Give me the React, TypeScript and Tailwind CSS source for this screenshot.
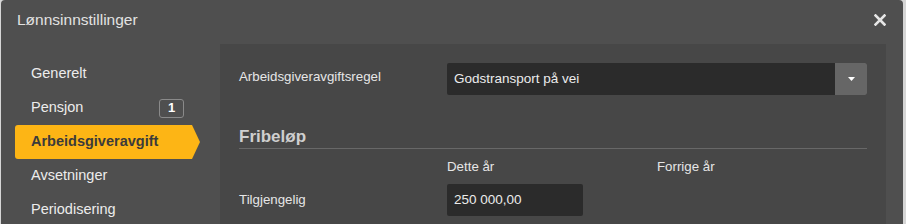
import React from "react";

const font = { fontFamily: '"Liberation Sans", Arial, sans-serif' };

const navItems = [
  { label: "Generelt" },
  { label: "Pensjon", badge: 1 },
  { label: "Arbeidsgiveravgift", active: true },
  { label: "Avsetninger" },
  { label: "Periodisering" },
];

export default function App() {
  return (
    <div className="h-[224px] w-[906px] overflow-hidden bg-[#d6d6d6] pl-px" style={font}>
      <div className="flex h-[230px] w-[902px] flex-col overflow-hidden rounded-t-[4px] bg-[#4f4f4f]">
        <header className="flex h-[44px] shrink-0 items-center justify-between pl-4 pr-[17px]">
          <h1 className="pb-[5px] text-[15.5px] text-[#e2e2e2]">Lønnsinnstillinger</h1>
          <button type="button" aria-label="Lukk" className="pb-[5px] text-[#e6e6e6]">
            <svg width="12" height="12" viewBox="0 0 12 12">
              <path d="M1.5 1.5 10.5 10.5M10.5 1.5 1.5 10.5" stroke="currentColor" strokeWidth="2.6" strokeLinecap="square" />
            </svg>
          </button>
        </header>

        <div className="flex flex-1">
          <nav className="w-[219px] shrink-0 pl-[14px] pt-[13px]">
            {navItems.map((item) =>
              item.active ? (
                <div
                  key={item.label}
                  className="flex h-[34px] w-[185px] items-center rounded-l-[3px] bg-[#fdb515] pl-4 text-[14.5px] font-bold text-[#3b3b3b] [clip-path:polygon(0_0,177px_0,185px_50%,177px_100%,0_100%)]"
                >
                  {item.label}
                </div>
              ) : (
                <div
                  key={item.label}
                  className="flex h-[34px] w-[177px] items-center justify-between pl-4 pr-2 text-[14.5px] text-[#ececec]"
                >
                  <span>{item.label}</span>
                  {item.badge && (
                    <span className="flex h-[19px] w-[25px] items-center justify-center rounded-[3px] border border-[#8a8a8a] text-[13px] font-bold text-white">
                      {item.badge}
                    </span>
                  )}
                </div>
              )
            )}
          </nav>

          <section className="w-[666px] bg-[#474747] px-[19px] pt-[19px]">
            <div className="flex items-center">
              <label className="w-[208px] pb-[4px] text-[13.3px] text-[#e6e6e6]">Arbeidsgiveravgiftsregel</label>
              <div className="flex h-[32px] flex-1 overflow-hidden rounded-[2px] bg-[#2b2b2b]">
                <span className="flex flex-1 items-center pl-[7px] text-[13.5px] text-[#ececec]">Godstransport på vei</span>
                <span className="flex w-[32px] items-center justify-center bg-[#666666]">
                  <svg width="7" height="4" viewBox="0 0 7 4">
                    <path d="M0 0h7L3.5 4z" fill="#ffffff" />
                  </svg>
                </span>
              </div>
            </div>

            <h2 className="mt-[32px] border-b border-[#686868] pb-px text-[17px] font-bold leading-[20px] text-[#cfcfcf]">
              Fribeløp
            </h2>

            <div className="mt-[8px] flex text-[13.3px] text-[#e6e6e6]">
              <span className="w-[208px]" />
              <span className="w-[210px]">Dette år</span>
              <span>Forrige år</span>
            </div>

            <div className="mt-[7px] flex items-center">
              <label className="w-[208px] text-[13.3px] text-[#e6e6e6]">Tilgjengelig</label>
              <div className="flex h-[32px] w-[136px] items-center rounded-[2px] bg-[#2b2b2b] pl-[7px] text-[13.5px] text-[#ececec]">
                250 000,00
              </div>
            </div>
          </section>
        </div>
      </div>
    </div>
  );
}
